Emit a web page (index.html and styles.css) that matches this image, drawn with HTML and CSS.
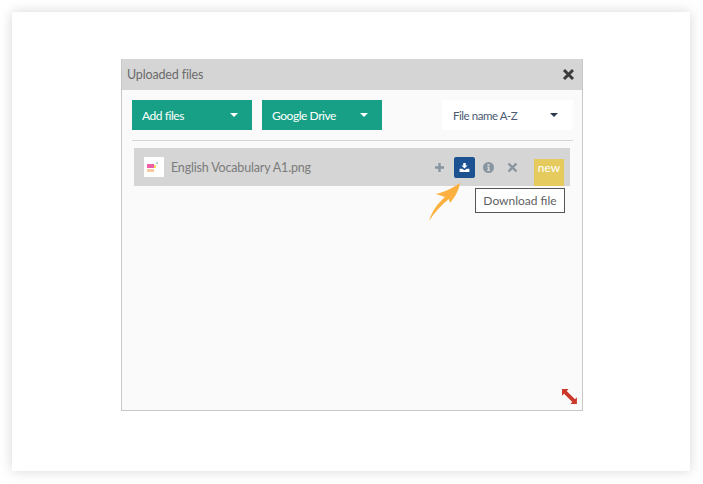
FILE: index.html
```html
<!DOCTYPE html>
<html lang="en">
<head>
<meta charset="utf-8">
<title>Uploaded files</title>
<link rel="stylesheet" href="styles.css">
</head>
<body>
<main class="card">
  <section class="panel">
    <header class="panel-head">
      <span class="panel-title">Uploaded files</span>
      <svg class="close" width="13" height="13" viewBox="0 0 13 13"><path d="M2 2l9 9M11 2l-9 9" stroke="#3c3c3c" stroke-width="3" fill="none"/></svg>
    </header>
    <div class="toolbar">
      <button class="btn"><span>Add files</span><i class="caret"></i></button>
      <button class="btn"><span>Google Drive</span><i class="caret"></i></button>
      <button class="sort"><span>File name A-Z</span><i class="caret dark"></i></button>
    </div>
    <div class="file">
      <span class="thumb">
        <svg width="20" height="20" viewBox="0 0 20 20">
          <rect width="20" height="20" rx="1" fill="#fff"/>
          <rect x="3" y="7" width="7" height="4" fill="#ee5fa7"/>
          <rect x="10" y="8" width="2" height="3" fill="#f2dc5d"/>
          <rect x="3" y="12" width="7" height="3" fill="#f8c9a0"/>
          <rect x="12" y="5" width="2" height="2" fill="#a8dcc8"/>
        </svg>
      </span>
      <span class="file-name">English Vocabulary A1.png</span>
      <span class="actions">
        <svg class="act" width="11" height="11" viewBox="0 0 11 11"><path d="M5.500 1v9M1 5.500h9" stroke="#8795a1" stroke-width="2.400" fill="none"/></svg>
        <span class="download">
          <svg width="11" height="9" viewBox="0 0 13 11"><path d="M5 0h3v3h2.200L6.500 6.600 2.800 3H5zM0.500 7h3.200l2.800 1.800L9.300 7h3.200v4H.5z" fill="#fff"/></svg>
        </span>
        <svg class="act info" width="11" height="11" viewBox="0 0 11 11"><circle cx="5.500" cy="5.500" r="5.500" fill="#8795a1"/><path d="M4.500 2h2v1.700h-2zM4.300 4.500h2.200v3.200h.6v1.300H4.200V7.700h.6V5.700h-.5z" fill="#d4d4d4"/></svg>
        <svg class="act" width="11" height="11" viewBox="0 0 11 11"><path d="M1.500 1.500l8 8M9.500 1.500l-8 8" stroke="#8795a1" stroke-width="2.400" fill="none"/></svg>
      </span>
      <span class="badge">new</span>
      <svg class="arrow" width="34" height="40" viewBox="0 0 34 40"><path d="M1 39C4 29 10 21 17 15L8 12C16 10 25 6 32 1C31 8 27 15 22 21L21 17C13 23 7 30 1 39Z" fill="#fbb040"/></svg>
      <span class="tooltip">Download file</span>
    </div>
    <svg class="resize" width="17" height="17" viewBox="0 0 17 17"><path d="M1 1h6.500L5.700 2.900 14 11.200l1.900-1.900V16H9.400l1.900-1.900L3 5.800 1 7.700z" fill="#c9382b"/></svg>
  </section>
</main>
</body>
</html>
```
FILE: styles.css
```css
* { box-sizing: border-box; }
html, body { margin: 0; height: 100%; background: #fff; }
body { padding: 12px 13px 13px 12px; font-family: Lato, sans-serif; overflow: hidden; }
.card {
  height: 459px;
  background: #fff;
  box-shadow: 0 0 12px rgba(0, 0, 0, .16);
  padding: 47px 107px 0 109px;
}
.panel {
  position: relative;
  width: 462px;
  height: 352px;
  background: #fafafa;
  border: 1px solid #c8c8c8;
  border-top: 0;
}
.panel-head {
  height: 31px;
  background: #d5d5d5;
  display: flex;
  align-items: center;
  justify-content: space-between;
  padding: 0 7px 0 5px;
}
.panel-title { font-size: 12.500px; letter-spacing: -.15px; color: #6b6b6b; }
.toolbar {
  margin: 10px 9px 0 10px;
  height: 41px;
  padding-bottom: 10px;
  border-bottom: 1px solid #d5d5d5;
  display: flex;
  gap: 10px;
}
.btn, .sort {
  border: 0;
  height: 30px;
  font: 12px Lato, sans-serif;
  letter-spacing: -.45px;
  display: flex;
  align-items: center;
  justify-content: space-between;
}
.btn {
  width: 120px;
  background: #17a085;
  color: #fff;
  padding: 0 14px 0 10px;
}
.sort {
  width: 131px;
  margin-left: auto;
  background: #fff;
  color: #4a5a70;
  padding: 0 15px 0 11px;
  font-size: 11.500px;
}
.caret {
  width: 0;
  height: 0;
  border: 4px solid transparent;
  border-top-color: #fff;
  border-bottom: 0;
}
.caret.dark { border-top-color: #2b3a4e; }
.file {
  position: relative;
  margin: 7px 12px 0;
  height: 38px;
  background: #d5d5d5;
  display: flex;
  align-items: center;
  padding-left: 10px;
}
.thumb { display: flex; width: 20px; height: 20px; }
.file-name { margin-left: 7px; font-size: 12.500px; letter-spacing: -.17px; color: #7b7b7b; flex: 1; }
.actions { display: flex; align-items: center; margin-right: 52px; }
.act { display: block; }
.download {
  width: 21px;
  height: 21px;
  margin: 0 8px 0 9px;
  background: #1c5291;
  border-radius: 2px;
  display: flex;
  align-items: center;
  justify-content: center;
}
.info { margin-right: 13px; }
.badge {
  position: absolute;
  right: 6px;
  top: 11px;
  width: 30px;
  height: 27px;
  background: #e5cb5e;
  color: #fff;
  font-size: 12px;
  text-align: center;
  line-height: 18px;
}
.arrow { position: absolute; left: 294px; top: 34px; }
.tooltip {
  position: absolute;
  left: 341px;
  top: 40px;
  width: 90px;
  height: 25px;
  background: #fff;
  border: 1px solid #555;
  font-size: 12px;
  color: #5f5f5f;
  text-align: center;
  line-height: 23px;
}
.resize { position: absolute; right: 4px; bottom: 5px; }
```
